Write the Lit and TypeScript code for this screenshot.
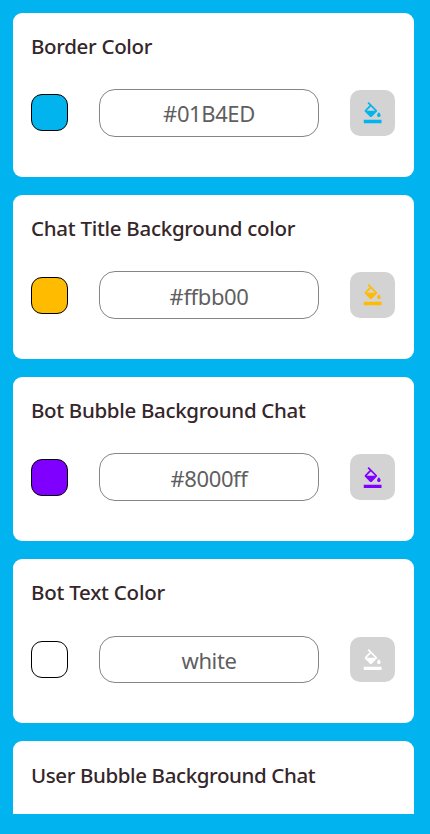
import { LitElement, html, css, nothing } from "lit";
import { customElement, property } from "lit/decorators.js";
import { styleMap } from "lit/directives/style-map.js";

interface Setting {
  title: string;
  value: string;
  tracking: number;
}

const SETTINGS: Setting[] = [
  { title: "Border Color", value: "#01B4ED", tracking: -0.32 },
  { title: "Chat Title Background color", value: "#ffbb00", tracking: -0.27 },
  { title: "Bot Bubble Background Chat", value: "#8000ff", tracking: -0.32 },
  { title: "Bot Text Color", value: "white", tracking: -0.23 },
  { title: "User Bubble Background Chat", value: "", tracking: -0.38 },
];

@customElement("color-card")
export class ColorCard extends LitElement {
  @property() heading = "";
  @property() value = "";
  @property({ type: Number }) tracking = 0;

  static styles = css`
    :host {
      display: block;
      flex: none;
      box-sizing: border-box;
      height: 164px;
      padding: 18.2px 19px 0 18px;
      border-radius: 9px;
      background: #fff;
    }
    .title {
      margin: 0;
      height: 30px;
      font: 500 20.5px/30px "Noto Sans", "Open Sans", sans-serif;
      color: #35262a;
      white-space: nowrap;
    }
    .row {
      display: flex;
      align-items: center;
      justify-content: space-between;
      height: 47.6px;
      margin-top: 28.1px;
    }
    .swatch {
      box-sizing: border-box;
      width: 37px;
      height: 37px;
      border: 1px solid #000;
      border-radius: 11px;
    }
    .field {
      box-sizing: border-box;
      width: 220px;
      height: 47.6px;
      padding-top: 0.3px;
      border: 1px solid #858585;
      border-radius: 16px;
      font: 400 22px/47px "Noto Sans", sans-serif;
      letter-spacing: -0.4px;
      color: #5f5f5f;
      text-align: center;
    }
    .fill {
      display: flex;
      align-items: center;
      justify-content: center;
      width: 45px;
      height: 45.6px;
      padding: 0 0.5px 0 0;
      border: 0;
      border-radius: 10px;
      background: #d3d3d3;
    }
    .icon {
      display: block;
      width: 21.3px;
      height: 21.3px;
      fill: currentColor;
    }
  `;

  render() {
    return html`
      <h2 class="title" style=${styleMap({ letterSpacing: `${this.tracking}px` })}>${this.heading}</h2>
      ${this.value ? this.renderRow() : nothing}
    `;
  }

  private renderRow() {
    return html`
      <div class="row">
        <div class="swatch" style=${styleMap({ backgroundColor: this.value })}></div>
        <div class="field">${this.value}</div>
        <button class="fill" aria-label="Pick color" style=${styleMap({ color: this.value })}>
          <svg class="icon" viewBox="0 0 24 24">
            <path d="M16.56 8.94L7.62 0 6.21 1.41l2.38 2.38-5.15 5.15c-.59.59-.59 1.54 0 2.12l5.5 5.5c.29.29.68.44 1.06.44s.77-.15 1.06-.44l5.5-5.5c.59-.58.59-1.53 0-2.12zM5.21 10L10 5.21 14.79 10H5.21zM19 11.5s-2 2.17-2 3.5c0 1.1.9 2 2 2s2-.9 2-2c0-1.33-2-3.5-2-3.5zM2 20h20v4H2z" />
          </svg>
        </button>
      </div>
    `;
  }
}

@customElement("app-root")
export class AppRoot extends LitElement {
  static styles = css`
    :host {
      display: block;
      box-sizing: border-box;
      height: 834px;
      padding: 12.8px 16px 20px 13px;
      background: #01b4ef;
    }
    .list {
      display: flex;
      flex-direction: column;
      gap: 18.15px;
      height: 801.2px;
      overflow: hidden;
    }
  `;

  render() {
    return html`
      <div class="list">
        ${SETTINGS.map(
          (s) => html`<color-card .heading=${s.title} .value=${s.value} .tracking=${s.tracking}></color-card>`
        )}
      </div>
    `;
  }
}
